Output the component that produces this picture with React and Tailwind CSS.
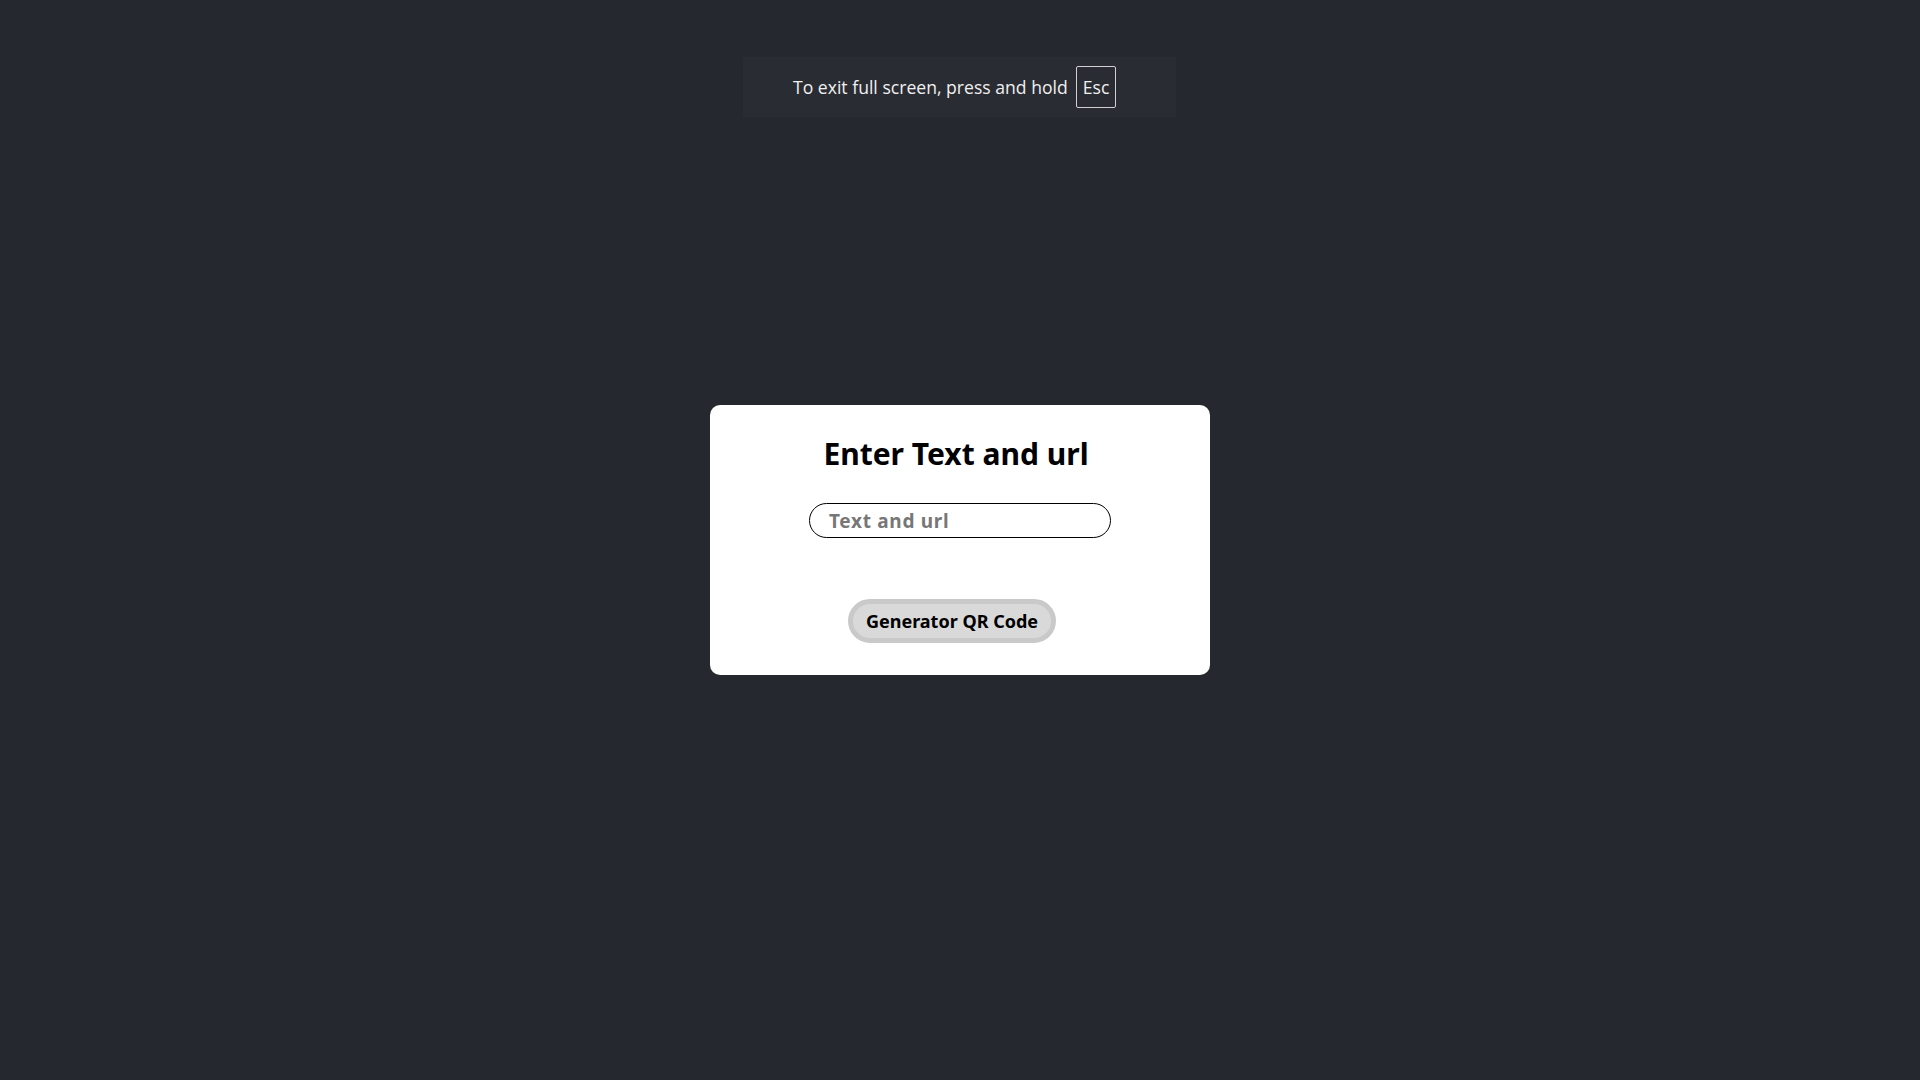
import { useState } from "react";

const App = () => {
  const [text, setText] = useState("");

  return (
    <div className="relative min-h-screen w-full bg-[#25282e] flex items-center justify-center font-['Noto_Sans',sans-serif]">
      {/* browser fullscreen notice */}
      <div className="absolute top-[57px] left-[743px] w-[433px] h-[60px] bg-[#2a2c33] flex items-center pl-[50px] gap-[8px] font-['Open_Sans',sans-serif]">
        <span className="text-[17.6px] text-[#f0f0f0]">To exit full screen, press and hold</span>
        <span className="border border-[#d0d0d0] rounded-[2px] text-[17.6px] text-[#f0f0f0] h-[42px] px-[6px] flex items-center">Esc</span>
      </div>

      <div className="w-[500px] h-[270px] bg-white rounded-[10px] flex flex-col items-center pt-[30px]">
        <h1 className="text-[30px] leading-[38px] font-bold text-black mr-2">Enter Text and url</h1>
        <input
          type="text"
          value={text}
          onChange={(e) => setText(e.target.value)}
          placeholder="Text and url"
          className="mt-[30px] w-[302px] h-[35px] border border-black rounded-full px-[19px] text-[19px] font-bold tracking-[0.7px] text-black placeholder:text-[#777] outline-none"
        />
        <button className="mt-[61px] mr-[16px] w-[208px] h-[44px] rounded-full bg-[#d9d9d9] border-[5px] border-[#c9c9c9] text-[18px] font-bold text-black">
          Generator QR Code
        </button>
      </div>
    </div>
  );
};

export default App;
